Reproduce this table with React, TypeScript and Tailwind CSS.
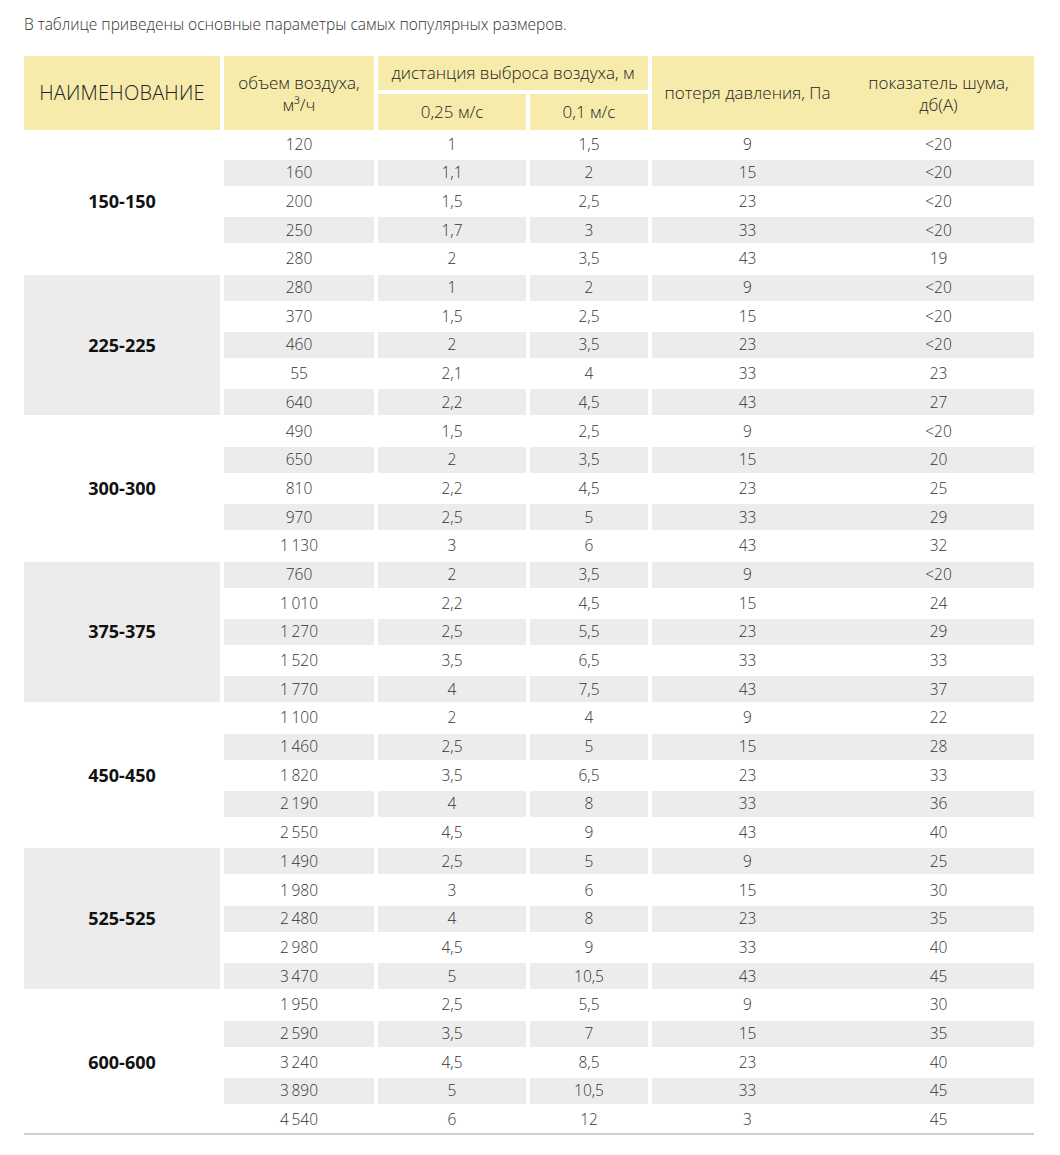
import React from 'react';

type Row = [string, string, string, string, string];

const groups: { name: string; rows: Row[] }[] = [
  {
    name: '150-150',
    rows: [
      ['120', '1', '1,5', '9', '<20'],
      ['160', '1,1', '2', '15', '<20'],
      ['200', '1,5', '2,5', '23', '<20'],
      ['250', '1,7', '3', '33', '<20'],
      ['280', '2', '3,5', '43', '19'],
    ],
  },
  {
    name: '225-225',
    rows: [
      ['280', '1', '2', '9', '<20'],
      ['370', '1,5', '2,5', '15', '<20'],
      ['460', '2', '3,5', '23', '<20'],
      ['55', '2,1', '4', '33', '23'],
      ['640', '2,2', '4,5', '43', '27'],
    ],
  },
  {
    name: '300-300',
    rows: [
      ['490', '1,5', '2,5', '9', '<20'],
      ['650', '2', '3,5', '15', '20'],
      ['810', '2,2', '4,5', '23', '25'],
      ['970', '2,5', '5', '33', '29'],
      ['1\u2009130', '3', '6', '43', '32'],
    ],
  },
  {
    name: '375-375',
    rows: [
      ['760', '2', '3,5', '9', '<20'],
      ['1\u2009010', '2,2', '4,5', '15', '24'],
      ['1\u2009270', '2,5', '5,5', '23', '29'],
      ['1\u2009520', '3,5', '6,5', '33', '33'],
      ['1\u2009770', '4', '7,5', '43', '37'],
    ],
  },
  {
    name: '450-450',
    rows: [
      ['1\u2009100', '2', '4', '9', '22'],
      ['1\u2009460', '2,5', '5', '15', '28'],
      ['1\u2009820', '3,5', '6,5', '23', '33'],
      ['2\u2009190', '4', '8', '33', '36'],
      ['2\u2009550', '4,5', '9', '43', '40'],
    ],
  },
  {
    name: '525-525',
    rows: [
      ['1\u2009490', '2,5', '5', '9', '25'],
      ['1\u2009980', '3', '6', '15', '30'],
      ['2\u2009480', '4', '8', '23', '35'],
      ['2\u2009980', '4,5', '9', '33', '40'],
      ['3\u2009470', '5', '10,5', '43', '45'],
    ],
  },
  {
    name: '600-600',
    rows: [
      ['1\u2009950', '2,5', '5,5', '9', '30'],
      ['2\u2009590', '3,5', '7', '15', '35'],
      ['3\u2009240', '4,5', '8,5', '23', '40'],
      ['3\u2009890', '5', '10,5', '33', '45'],
      ['4\u2009540', '6', '12', '3', '45'],
    ],
  },
];

const cols = 'grid grid-cols-[196px_150px_148px_118px_382px] gap-x-[4px]';

export default function App() {
  return (
    <div className="bg-white min-h-[1155px] px-[24px] pt-[13px] font-['Open_Sans','Noto_Sans',sans-serif] text-[#2b2b2b]">
      <p className="text-[15.5px] leading-[22px] font-light text-[#333]">
        В таблице приведены основные параметры самых популярных размеров.
      </p>

      {/* header */}
      <div className={`${cols} grid-rows-[33.5px_36px] gap-y-[4.5px] mt-[21px] font-light text-[17px] leading-[22px] text-[#222]`}>
        <div className="row-span-2 bg-[#f6ebab] flex items-center justify-center text-[20px] tracking-[0.2px]">
          НАИМЕНОВАНИЕ
        </div>
        <div className="row-span-2 bg-[#f6ebab] flex items-center justify-center text-center pt-[2px]">
          объем воздуха,
          <br />
          м³/ч
        </div>
        <div className="col-span-2 bg-[#f6ebab] flex items-center justify-center">
          дистанция выброса воздуха, м
        </div>
        <div className="row-span-2 bg-[#f6ebab] grid grid-cols-2">
          <div className="flex items-center justify-center">потеря давления, Па</div>
          <div className="flex items-center justify-center text-center pt-[2px]">
            показатель шума,
            <br />
            дб(А)
          </div>
        </div>
        <div className="bg-[#f6ebab] flex items-center justify-center">0,25 м/с</div>
        <div className="bg-[#f6ebab] flex items-center justify-center">0,1 м/с</div>
      </div>

      {/* body */}
      <div className={`${cols} auto-rows-[26px] gap-y-[2.7px] mt-[1.3px] text-[15.5px] font-light text-[#333]`}>
        {groups.map((g, gi) => (
          <React.Fragment key={g.name}>
            <div
              className={`flex items-center justify-center font-bold text-[18px] text-[#111] ${
                gi % 2 === 1 ? 'bg-[#ececec]' : ''
              }`}
              style={{ gridRow: `${gi * 5 + 1} / span 5`, gridColumn: '1' }}
            >
              {g.name}
            </div>
            {g.rows.map((r, ri) => {
              const idx = gi * 5 + ri;
              const bg = idx % 2 === 1 ? 'bg-[#ececec]' : '';
              return (
                <React.Fragment key={ri}>
                  <div className={`${bg} flex items-center justify-center`}>{r[0]}</div>
                  <div className={`${bg} flex items-center justify-center`}>{r[1]}</div>
                  <div className={`${bg} flex items-center justify-center`}>{r[2]}</div>
                  <div className={`${bg} grid grid-cols-2`}>
                    <span className="flex items-center justify-center">{r[3]}</span>
                    <span className="flex items-center justify-center">{r[4]}</span>
                  </div>
                </React.Fragment>
              );
            })}
          </React.Fragment>
        ))}
      </div>
      <div className="h-[2px] bg-[#cfcfcf] w-[1010px]" />
    </div>
  );
}
